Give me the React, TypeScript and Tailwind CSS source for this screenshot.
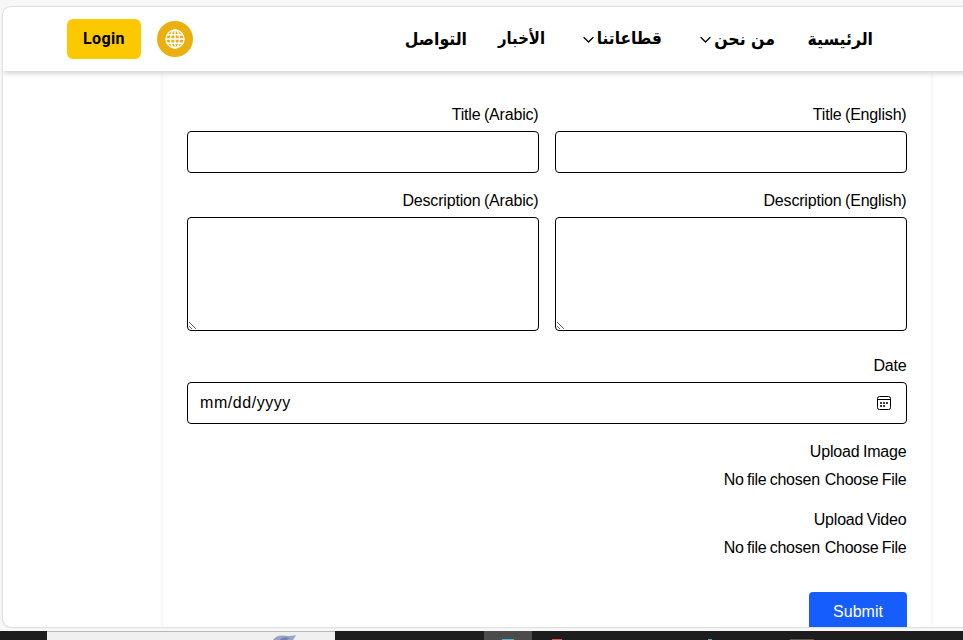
import React from "react";

const latin = "font-['Liberation_Sans',Arial,sans-serif]";

function Label({ children }: { children: string }) {
  return (
    <label dir="ltr" className={`block h-6 pr-[0.5px] text-right text-base leading-6 tracking-[-0.18px] whitespace-nowrap [word-spacing:-0.8px] ${latin}`}>
      {children}
    </label>
  );
}

function Chevron() {
  return (
    <svg className="shrink-0" width="11" height="12" viewBox="0 0 11 12" fill="none" stroke="black" strokeWidth="1.3" strokeLinecap="round" strokeLinejoin="round">
      <path d="M1 4.5 5.5 9 10 4.5" />
    </svg>
  );
}

function Globe() {
  return (
    <svg width="20" height="20" viewBox="0 0 20 20" fill="none" stroke="white" strokeWidth="1.4">
      <circle cx="10" cy="10" r="9" />
      <ellipse cx="10" cy="10" rx="4.5" ry="9" />
      <path d="M10 1v18M1 10h18M2.2 5.8h15.6M2.2 14.2h15.6" />
    </svg>
  );
}

function Calendar() {
  return (
    <svg width="14" height="14" viewBox="0 0 14 14" fill="none" stroke="black">
      <rect x=".5" y=".5" width="13" height="13" rx="2" />
      <path d="M.5 3.5h13" />
      <path d="M3 7h2M6 7h2M9 7h2M3 10h2M6 10h2" strokeWidth="1.5" />
    </svg>
  );
}

function FileInput({ label }: { label: string }) {
  return (
    <div>
      <Label>{label}</Label>
      <div dir="ltr" className={`mt-1 flex h-6 justify-end gap-[5px] pr-[0.5px] text-base leading-6 tracking-[-0.26px] whitespace-nowrap [word-spacing:-0.8px] ${latin}`}>
        <span>No file chosen</span>
        <span>Choose File</span>
      </div>
    </div>
  );
}

export default function App() {
  return (
    <div className="flex h-[640px] w-[963px] flex-col overflow-hidden bg-[#f7f7f7] pt-[7px] text-black">
      <div className="ml-[3px] flex h-[620px] w-[980px] shrink-0 flex-col overflow-hidden rounded-l-lg bg-white shadow-[0_0_2px_rgba(0,0,0,0.35)]">
        <header className="relative z-10 flex h-16 w-full shrink-0 items-center bg-white pr-[110px] pl-16 shadow-[0_2px_6px_rgba(0,0,0,0.2)]">
          <button className="h-10 w-[74px] rounded-md bg-[#fcc800] font-['Roboto',sans-serif] text-base font-bold tracking-[0.35px]">
            Login
          </button>
          <button className="ml-4 flex size-9 items-center justify-center rounded-full bg-[#eab010]">
            <Globe />
          </button>
          <nav dir="rtl" className="ml-auto flex items-center font-['DejaVu_Sans_Condensed','DejaVu_Sans',sans-serif] text-[17.5px] font-bold [font-stretch:condensed] whitespace-nowrap">
            <a className="w-[66px]">الرئيسية</a>
            <a className="mr-8 flex w-[75px] items-center justify-between">من نحن<Chevron /></a>
            <a className="mr-[38px] flex w-[79px] items-center justify-between text-[17.2px]">قطاعاتنا<Chevron /></a>
            <a className="mr-[38px] w-[47px] text-[16.5px]">الأخبار</a>
            <a className="mr-[31px] w-[62px]">التواصل</a>
          </nav>
        </header>
        <main className="ml-40 h-[556px] w-[768px] bg-white px-6 pt-8 shadow-[0_0_4px_rgba(0,0,0,0.08)]">
          <form dir="rtl">
            <div className="grid grid-cols-2 gap-4">
              <div>
                <Label>Title (English)</Label>
                <input className="mt-1 block h-[42px] w-full rounded border border-black" />
              </div>
              <div>
                <Label>Title (Arabic)</Label>
                <input className="mt-1 block h-[42px] w-full rounded border border-black" />
              </div>
              <div>
                <Label>Description (English)</Label>
                <textarea className="mt-1 block h-[114px] w-full rounded border border-black" />
              </div>
              <div>
                <Label>Description (Arabic)</Label>
                <textarea className="mt-1 block h-[114px] w-full rounded border border-black" />
              </div>
            </div>
            <div className="mt-[23px]">
              <Label>Date</Label>
              <div dir="ltr" className="mt-1 flex h-[42px] items-center justify-between rounded border border-black pr-[15px] pl-3">
                <span className={`text-base tracking-[0.55px] ${latin}`}>mm/dd/yyyy</span>
                <Calendar />
              </div>
            </div>
            <div className="mt-4 flex flex-col gap-4">
              <FileInput label="Upload Image" />
              <FileInput label="Upload Video" />
            </div>
            <button type="button" dir="ltr" className={`mt-8 h-10 w-[98px] rounded bg-[#155dfc] text-base text-white ${latin}`}>
              Submit
            </button>
          </form>
        </main>
      </div>
      <div className="mt-1 flex h-[9px] w-full shrink-0 items-end bg-[#1d1d1d]">
        <div className="h-full w-[47px]" />
        <div className="flex h-full w-72 items-end border-t border-[#b8b8b8] bg-[#f0f0f0] pl-[226px]">
          <svg width="24" height="5" viewBox="0 0 24 5">
            <path d="M0 5Q3 0 10 .5 17 1.5 23 0l-3 5z" fill="#9da3c7" />
            <path d="M7 5q2-4 9-2l-2 2z" fill="#767fa9" />
          </svg>
        </div>
        <div className="ml-[149px] flex h-full w-12 items-end justify-center bg-[#4b4b4b]">
          <div className="h-px w-3 bg-[#48b7d2]" />
        </div>
        <div className="ml-5 h-px w-2.5 bg-[#d65546]" />
        <div className="ml-[146px] h-px w-1 bg-[#4ba3c6]" />
        <div className="ml-[78px] h-px w-6 bg-[#64544b]" />
      </div>
    </div>
  );
}
